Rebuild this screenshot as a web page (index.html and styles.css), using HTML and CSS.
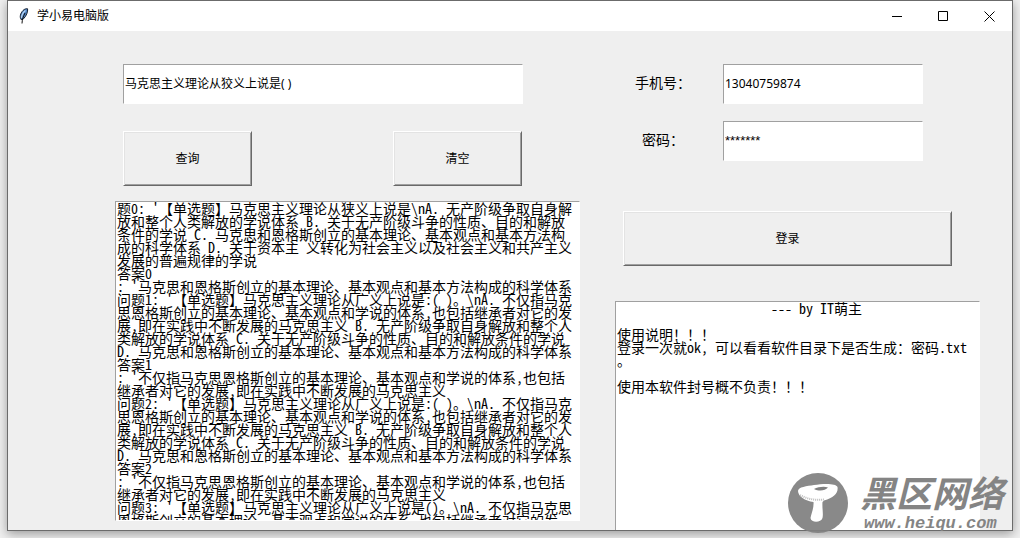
FILE: index.html
```html
<!DOCTYPE html>
<html lang="zh-CN">
<head>
<meta charset="utf-8">
<title>学小易电脑版</title>
<link rel="stylesheet" href="styles.css">
</head>
<body>
<main class="window">
  <header class="titlebar">
    <svg class="feather" width="10" height="16" viewBox="0 0 10 16" aria-hidden="true">
      <path d="M2 11.500C.6 9 1.200 5.500 4 2.500 5.400 1 7.600.4 8.600.8 9 3.500 7.500 8 4.500 10.800Z" fill="#4f83c4" stroke="#16202e" stroke-width="1"/>
      <path d="M6.500 2.500C4 4.500 2.600 7.500 2.600 10" fill="none" stroke="#b9d7f5" stroke-width="1.200"/>
      <path d="M6 5C4 9 3.200 11.500 3 15.500" fill="none" stroke="#111" stroke-width="1"/>
    </svg>
    <h1 class="title">学小易电脑版</h1>
    <div class="controls">
      <button class="control" type="button" aria-label="最小化"><svg width="11" height="11" viewBox="0 0 11 11"><path d="M0 5.500H10"/></svg></button>
      <button class="control" type="button" aria-label="最大化"><svg width="11" height="11" viewBox="0 0 11 11"><path d="M.5.5H9.500V9.500H.5Z"/></svg></button>
      <button class="control" type="button" aria-label="关闭"><svg width="11" height="11" viewBox="0 0 11 11"><path d="M.5.5 10.500 10.500M10.500.5.5 10.500"/></svg></button>
    </div>
  </header>
  <div class="client">
    <section class="search">
      <div class="search-form">
        <input class="field" type="text" aria-label="题目" value="马克思主义理论从狡义上说是( )">
        <div class="actions">
          <button class="button" type="button">查询</button>
          <button class="button" type="button">清空</button>
        </div>
      </div>
      <textarea class="text results" aria-label="查询结果" wrap="off" spellcheck="false">题0: '【单选题】马克思主义理论从狭义上说是\nA. 无产阶级争取自身解
放和整个人类解放的学说体系 B. 关于无产阶级斗争的性质、目的和解放
条件的学说 C. 马克思和恩格斯创立的基本理论、基本观点和基本方法构
成的科学体系 D. 关于资本主 义转化为社会主义以及社会主义和共产主义
发展的普遍规律的学说
答案0
: '马克思和恩格斯创立的基本理论、基本观点和基本方法构成的科学体系
问题1: '【单选题】马克思主义理论从广义上说是:( )。\nA. 不仅指马克
思恩格斯创立的基本理论、基本观点和学说的体系,也包括继承者对它的发
展,即在实践中不断发展的马克思主义 B. 无产阶级争取自身解放和整个人
类解放的学说体系 C. 关于无产阶级斗争的性质、目的和解放条件的学说
D. 马克思和恩格斯创立的基本理论、基本观点和基本方法构成的科学体系
答案1
: '不仅指马克思恩格斯创立的基本理论、基本观点和学说的体系,也包括
继承者对它的发展,即在实践中不断发展的马克思主义
问题2: '【单选题】马克思主义理论从广义上说是:( )。\nA. 不仅指马克
思恩格斯创立的基本理论、基本观点和学说的体系,也包括继承者对它的发
展,即在实践中不断发展的马克思主义 B. 无产阶级争取自身解放和整个人
类解放的学说体系 C. 关于无产阶级斗争的性质、目的和解放条件的学说
D. 马克思和恩格斯创立的基本理论、基本观点和基本方法构成的科学体系
答案2
: '不仅指马克思恩格斯创立的基本理论、基本观点和学说的体系,也包括
继承者对它的发展,即在实践中不断发展的马克思主义
问题3: '【单选题】马克思主义理论从广义上说是()。\nA. 不仅指马克思
恩格斯创立的基本理论、基本观点和学说的体系,也包括继承者对它的发</textarea>
    </section>
    <section class="account">
      <form class="login">
        <label class="label" for="phone">手机号：</label>
        <input class="field" id="phone" type="text" value="13040759874">
        <label class="label" for="password">密码：</label>
        <input class="field masked" id="password" type="text" value="*******">
      </form>
      <button class="button submit" type="button">登录</button>
      <textarea class="text notice" aria-label="使用说明" wrap="off" spellcheck="false">                      --- by IT萌主

使用说明！！！
登录一次就ok， 可以看看软件目录下是否生成：密码.txt
。

使用本软件封号概不负责！！！</textarea>
    </section>
  </div>
</main>
<aside class="watermark">
  <svg width="60" height="60" viewBox="0 0 60 60" aria-hidden="true">
    <circle cx="30" cy="30" r="30" fill="#808080" fill-opacity=".93"/>
    <path d="M10 18C10 14 19 13 26 12 35 10.500 48 10 49.500 14 50.500 20 46 25 36 27.500L34.500 29C34 35 35.500 41 34.500 45 33 50 23 50 22.500 45 23.500 40 26 35 25.500 29 17 28 10 23 10 18Z" fill="#fff"/>
    <path d="M26 16C30 14 36 13 40 14.500 37 18 31 18.500 26 16Z" fill="#808080"/>
    <path d="M12 22C19 26 27 27.500 36 26.500" fill="none" stroke="#bbb" stroke-width="2" stroke-dasharray="1 1"/>
  </svg>
  <div class="brand">
    <span class="brand-name">黑区网络</span>
    <span class="brand-url">www.heiqu.com</span>
  </div>
</aside>
</body>
</html>
```
FILE: styles.css
```css
* {
  box-sizing: border-box;
}

body {
  margin: 0;
  padding: 0 7px 7px;
  overflow: hidden;
  background: #f0f0f0;
  color: #000;
  font: 12px/16px "Noto Sans", "Noto Sans CJK SC", sans-serif;
}

.window {
  border: 1px solid #6b6b6b;
  background: #efefef;
  box-shadow: 0 3px 10px rgba(0, 0, 0, 0.36);
}

.titlebar {
  display: flex;
  align-items: center;
  height: 30px;
  padding-left: 11px;
  background: #fff;
}

.title {
  flex: 1;
  margin: 0 0 0 8px;
  font-size: 12px;
  font-weight: 400;
}

.controls {
  display: flex;
}

.control {
  display: flex;
  align-items: center;
  justify-content: center;
  width: 46px;
  height: 30px;
  padding: 0;
  border: 0;
  background: none;
}

.control path {
  fill: none;
  stroke: #000;
}

.client {
  display: grid;
  grid-template-columns: 465fr 365fr;
  gap: 35px;
  padding: 33px 32px 0 107px;
}

.search {
  padding-bottom: 9px;
}

.search-form {
  padding: 0 57px 0 8px;
}

.field {
  display: block;
  width: 100%;
  height: 40px;
  padding: 0 1px 2px;
  border: 1px solid;
  border-color: #a0a0a0 #fff #fff #a0a0a0;
  background: #fff;
  color: #000;
  font: inherit;
}

.masked {
  font: 13px/16px "Liberation Sans", sans-serif;
}

.actions {
  display: flex;
  justify-content: space-between;
  margin: 27px 1px 15px 0;
}

.button {
  width: 129px;
  height: 55px;
  padding: 0;
  border: 1px solid;
  border-color: #fff #696969 #696969 #fff;
  background: #efefef;
  box-shadow: inset 1px 1px #e3e3e3, inset -1px -1px #a0a0a0;
  color: #000;
  font: inherit;
}

.text {
  display: block;
  width: 100%;
  padding: 0 1px 1px;
  overflow: hidden;
  border: 1px solid;
  border-color: #a0a0a0 #fff #fff #a0a0a0;
  background: #fff;
  color: #000;
  font: 14px/13px "Noto Sans CJK SC", sans-serif;
  font-feature-settings: "hwid";
  resize: none;
}

.results {
  height: 320px;
}

.account {
  display: flex;
  flex-direction: column;
}

.login {
  display: grid;
  grid-template-columns: 96px 1fr;
  gap: 17px 12px;
  align-items: center;
  padding-right: 57px;
}

.label {
  padding-bottom: 4px;
  font: 14px/16px "Noto Sans CJK TC", sans-serif;
  text-align: center;
}

.submit {
  width: auto;
  margin: 50px 28px 35px 8px;
}

.notice {
  flex: 1;
  border-bottom: 0;
}

.watermark {
  position: absolute;
  right: 16px;
  bottom: 5px;
  display: flex;
  gap: 12px;
  color: #848484;
}

.brand {
  display: flex;
  flex-direction: column;
  gap: 6px;
}

.brand-name {
  font: italic 700 36px/36px "Noto Sans CJK SC", sans-serif;
}

.brand-url {
  padding-left: 4px;
  font: italic 700 17px/18px "Liberation Mono", monospace;
}
```
